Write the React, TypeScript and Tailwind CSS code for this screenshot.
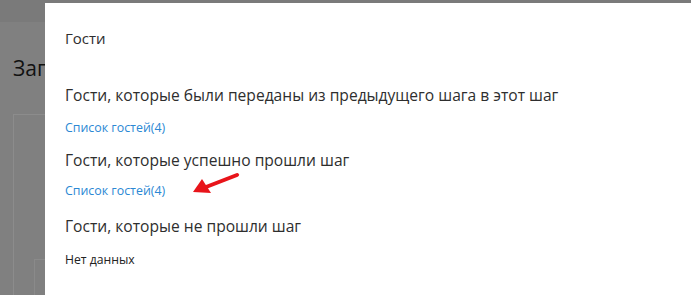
export default function App() {
  return (
    <div className="relative w-[691px] h-[295px] overflow-hidden bg-[#808080]" style={{ fontFamily: '"Open Sans", "Liberation Sans", sans-serif' }}>
      {/* page behind the overlay */}
      <div className="h-[22px] bg-[#7a7a7a]" />
      <div className="pl-[13px] pt-[32px] text-[21px] leading-[28px] text-[#111]">Заголовок</div>
      <div className="ml-[13px] mt-[32px] h-[200px] border-l border-t border-[#8c8c8c]">
        <div className="ml-[20px] mt-[144px] h-[60px] border-l border-t border-[#8a8a8a]" />
      </div>

      {/* modal */}
      <div className="absolute left-[45px] top-[3px] right-0 bottom-0 bg-white pl-[20px] pt-[23px] text-[#2e2e2e]">
        <div className="text-[15px] leading-[24px]">Гости</div>
        <div className="mt-[33px] text-[15.6px] leading-[24px]">Гости, которые были переданы из предыдущего шага в этот шаг</div>
        <div className="mt-[11px] text-[12.4px] leading-[20px] text-[#2b88d4]">Список гостей(4)</div>
        <div className="mt-[10px] text-[15.6px] leading-[24px]">Гости, которые успешно прошли шаг</div>
        <div className="mt-[9px] text-[12.4px] leading-[20px] text-[#2b88d4]">Список гостей(4)</div>
        <div className="mt-[13px] text-[15.6px] leading-[24px]">Гости, которые не прошли шаг</div>
        <div className="mt-[12px] text-[12.2px] leading-[20px] text-[#222]">Нет данных</div>
      </div>

      {/* annotation arrow */}
      <svg className="absolute left-[190px] top-[170px]" width="52" height="28" viewBox="0 0 52 28">
        <line x1="47" y1="5" x2="16" y2="17" stroke="#e8141a" strokeWidth="4" strokeLinecap="round" />
        <polygon points="3,22 12,9 21,23" fill="#e8141a" />
      </svg>
    </div>
  );
}
